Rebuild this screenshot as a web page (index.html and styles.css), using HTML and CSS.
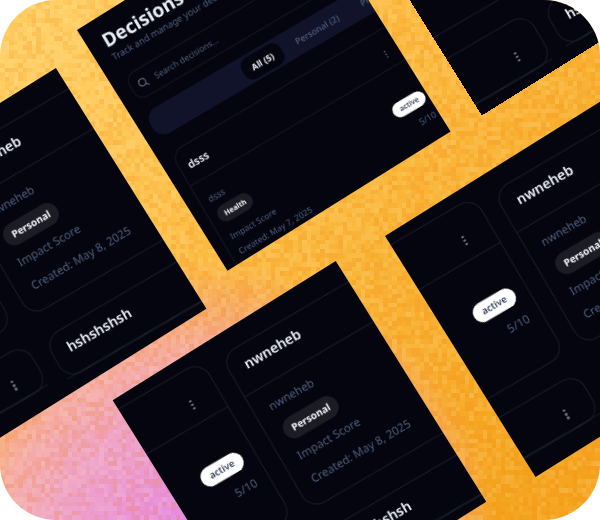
FILE: index.html
```html
<!DOCTYPE html>
<html lang="en">
<head>
<meta charset="utf-8">
<title>Decisions</title>
<link rel="stylesheet" href="styles.css">
</head>
<body>
<main class="poster">
  <canvas class="grain" id="grain" width="133" height="115"></canvas>
  <div class="stage">

    <!-- B -->
    <section class="panel panel-b">
      <div class="sheet">
        <div class="col">
          <article class="card card-tall">
            <header class="card-head"><h3>hshshshsh</h3><span class="dots"><i></i><i></i><i></i></span></header>
            <div class="card-body">
              <div class="info"><p class="desc">hshshshsh</p><span class="tag">Personal</span><p class="meta">Impact Score</p><p class="meta">Created: May 8, 2025</p></div>
              <div class="status"><span class="badge">active</span><span class="score">5/10</span></div>
            </div>
          </article>
          <article class="card card-low">
            <header class="card-head"><h3>nwneheb</h3><span class="dots"><i></i><i></i><i></i></span></header>
          </article>
        </div>
        <div class="col col-right">
          <article class="card">
            <header class="card-head"><h3>nwneheb</h3><span class="dots"><i></i><i></i><i></i></span></header>
            <div class="card-body">
              <div class="info"><p class="desc">nwneheb</p><span class="tag">Personal</span><p class="meta">Impact Score</p><p class="meta">Created: May 8, 2025</p></div>
              <div class="status"><span class="badge">active</span><span class="score">5/10</span></div>
            </div>
          </article>
          <article class="card">
            <header class="card-head"><h3>hshshshsh</h3><span class="dots"><i></i><i></i><i></i></span></header>
          </article>
        </div>
      </div>
    </section>

    <!-- A -->
    <section class="panel panel-a">
      <div class="sheet-a">
        <h1>Decisions</h1>
        <p class="lead">Track and manage your decisions</p>
        <div class="search">
          <svg class="lens" viewBox="0 0 16 16" aria-hidden="true"><circle cx="7" cy="7" r="5"/><path d="M10.8 10.8 14 14"/></svg>
          <span>Search decisions...</span>
        </div>
        <nav class="tabs"><span class="tab tab-on">All (5)</span><span class="tab">Personal (2)</span><span class="tab">Professional (1)</span></nav>
        <article class="card card-a">
          <header class="card-head"><h3>dsss</h3><span class="dots"><i></i><i></i><i></i></span></header>
          <div class="card-body">
            <div class="info"><p class="desc">dsss</p><span class="tag">Health</span><p class="meta">Impact Score</p><p class="meta">Created: May 7, 2025</p></div>
            <div class="status"><span class="badge">active</span><span class="score">5/10</span></div>
          </div>
        </article>
      </div>
    </section>

    <!-- C -->
    <section class="panel panel-c">
      <div class="sheet">
        <div class="col">
          <article class="card card-tall">
            <header class="card-head"><h3>hshshshsh</h3><span class="dots"><i></i><i></i><i></i></span></header>
            <div class="card-body">
              <div class="info"><p class="desc">hshshshsh</p><span class="tag">Personal</span><p class="meta">Impact Score</p><p class="meta">Created: May 8, 2025</p></div>
              <div class="status"><span class="badge">active</span><span class="score">5/10</span></div>
            </div>
          </article>
          <article class="card card-low">
            <header class="card-head"><h3>nwneheb</h3><span class="dots"><i></i><i></i><i></i></span></header>
          </article>
        </div>
        <div class="col col-right">
          <article class="card">
            <header class="card-head"><h3>nwneheb</h3><span class="dots"><i></i><i></i><i></i></span></header>
            <div class="card-body">
              <div class="info"><p class="desc">nwneheb</p><span class="tag">Personal</span><p class="meta">Impact Score</p><p class="meta">Created: May 8, 2025</p></div>
              <div class="status"><span class="badge">active</span><span class="score">5/10</span></div>
            </div>
          </article>
          <article class="card">
            <header class="card-head"><h3>hshshshsh</h3><span class="dots"><i></i><i></i><i></i></span></header>
          </article>
        </div>
      </div>
    </section>

    <!-- D -->
    <section class="panel panel-d">
      <div class="sheet">
        <div class="col">
          <article class="card card-tall">
            <header class="card-head"><h3>hshshshsh</h3><span class="dots"><i></i><i></i><i></i></span></header>
            <div class="card-body">
              <div class="info"><p class="desc">hshshshsh</p><span class="tag">Personal</span><p class="meta">Impact Score</p><p class="meta">Created: May 8, 2025</p></div>
              <div class="status"><span class="badge">active</span><span class="score">5/10</span></div>
            </div>
          </article>
          <article class="card card-low">
            <header class="card-head"><h3>nwneheb</h3><span class="dots"><i></i><i></i><i></i></span></header>
          </article>
        </div>
        <div class="col col-right">
          <article class="card">
            <header class="card-head"><h3>nwneheb</h3><span class="dots"><i></i><i></i><i></i></span></header>
            <div class="card-body">
              <div class="info"><p class="desc">nwneheb</p><span class="tag">Personal</span><p class="meta">Impact Score</p><p class="meta">Created: May 8, 2025</p></div>
              <div class="status"><span class="badge">active</span><span class="score">5/10</span></div>
            </div>
          </article>
          <article class="card">
            <header class="card-head"><h3>hshshshsh</h3><span class="dots"><i></i><i></i><i></i></span></header>
          </article>
        </div>
      </div>
    </section>

    <!-- E -->
    <section class="panel panel-e">
      <div class="sheet">
        <div class="col col-e">
          <article class="card card-tall">
            <header class="card-head"><h3>hshshshsh</h3><span class="dots"><i></i><i></i><i></i></span></header>
            <div class="card-body">
              <div class="info"><p class="desc">hshshshsh</p><span class="tag">Personal</span><p class="meta">Impact Score</p><p class="meta">Created: May 8, 2025</p></div>
              <div class="status"><span class="badge">active</span><span class="score">5/10</span></div>
            </div>
          </article>
          <article class="card card-tall">
            <header class="card-head"><h3>nwneheb</h3><span class="dots"><i></i><i></i><i></i></span></header>
          </article>
        </div>
        <div class="col col-right">
          <article class="card">
            <header class="card-head"><h3>nwneheb</h3><span class="dots"><i></i><i></i><i></i></span></header>
            <div class="card-body">
              <div class="info"><p class="desc">nwneheb</p><span class="tag">Personal</span><p class="meta">Impact Score</p><p class="meta">Created: May 8, 2025</p></div>
              <div class="status"><span class="badge">active</span><span class="score">5/10</span></div>
            </div>
          </article>
          <article class="card">
            <header class="card-head"><h3>hshshshsh</h3><span class="dots"><i></i><i></i><i></i></span></header>
          </article>
        </div>
      </div>
    </section>

  </div>
</main>
<script src="grain.js"></script>
</body>
</html>
```
FILE: styles.css
```css
* { box-sizing: border-box; }
html, body { margin: 0; background: #fff; }
body { width: 600px; height: 520px; overflow: hidden; font-family: "Noto Sans", "Open Sans", sans-serif; }
h1, h3, p { margin: 0; }

.poster {
  position: relative;
  width: 600px;
  height: 520px;
  overflow: hidden;
  border-radius: 56px;
  background:
    radial-gradient(circle 300px at 200px 560px, #e582e6 0, #e78ee0 20%, #efa3c8 50%, #f5aba6 68%, rgba(246, 166, 113, .85) 82%, rgba(246, 166, 100, 0) 100%),
    linear-gradient(128deg, #ffcf64 8%, #fcbc42 42%, #f5a51f 88%);
}
.grain {
  position: absolute;
  left: 0;
  top: 0;
  width: 600px;
  height: 520px;
  image-rendering: pixelated;
}

/* the collage: panels sit on a rotated free canvas */
.stage {
  position: absolute;
  left: 77px;
  top: 30px;
  width: 0;
  height: 0;
  transform-origin: 0 0;
  transform: rotate(-32deg);
}
.panel {
  position: absolute;
  width: 263px;
  height: 284px;
  overflow: hidden;
  background: #04050f;
}
.panel-a { left: 0; top: 0; }
.panel-b { left: -301px; top: 21px; }
.panel-c { left: -166px; top: 333px; }
.panel-d { left: 152px; top: 338px; }
.panel-e { left: 298px; top: 3px; }

.sheet {
  display: grid;
  grid-template-columns: 337px 337px;
  column-gap: 18px;
  width: 692px;
  align-items: start;
  transform-origin: 0 0;
  transform: rotate(1.7deg) translate(-240px, 10px);
}
.col { display: flex; flex-direction: column; gap: 21px; }
.col-e { gap: 24px; margin: 0 -2px 0 2px; }
.col-right { padding-top: 6px; gap: 25px; }

.card {
  border: 1px solid #1a1d2b;
  border-radius: 17px;
  color: #e6ebf5;
}
.card-head {
  display: flex;
  align-items: center;
  justify-content: space-between;
  height: 46.5px;
  padding: 0 28px 7px 16px;
  border-bottom: 1px solid #1a1d2b;
}
.card-tall .card-head { height: 53px; padding: 14px 28px 0 16px; }
.card-low .card-head { padding: 15px 28px 0 16px; }
.card-head h3 { font-size: 14px; font-weight: 600; line-height: 20px; color: #eef2fa; }
.card-body { display: flex; justify-content: space-between; height: 130px; padding: 10px 13px 0 16px; }
.card-tall .card-body { height: 128px; }

.dots { display: flex; flex-direction: column; gap: 1.6px; }
.dots i { width: 2.6px; height: 2.6px; border-radius: 50%; background: #6a7285; }

.info { display: flex; flex-direction: column; align-items: flex-start; }
.desc { font-size: 11.5px; line-height: 21px; color: #50607f; }
.tag {
  margin: 8px 0 5px;
  padding: 0 9px;
  height: 23px;
  line-height: 23px;
  border-radius: 12px;
  background: #1b1c24;
  color: #f4f6fa;
  font-size: 10px;
  font-weight: 700;
}
.meta { font-size: 11.5px; line-height: 21px; margin-bottom: 6px; color: #50607f; }

.status { display: flex; flex-direction: column; align-items: flex-end; padding-top: 31px; }
.badge {
  width: 47px;
  height: 20px;
  line-height: 19px;
  text-align: center;
  border-radius: 10px;
  background: #fff;
  color: #2f3a55;
  font-size: 9.5px;
  font-weight: 600;
}
.score { margin-top: 8px; font-size: 11.5px; line-height: 20px; color: #50607f; }

/* first panel: the app shown smaller, with its page header */
.sheet-a {
  width: 360px;
  transform-origin: 0 0;
  transform: rotate(1.5deg) scale(.77);
  padding: 15px 0 0 21.7px;
  color: #e6ebf5;
}
.sheet-a h1 { font-size: 25px; line-height: 30px; font-weight: 700; color: #e8eef8; }
.lead { margin-top: 2px; font-size: 12px; line-height: 16px; color: #50607f; white-space: nowrap; }
.search {
  display: flex;
  align-items: center;
  gap: 10px;
  width: 340px;
  height: 38px;
  margin-top: 20px;
  padding-left: 9px;
  border: 1px solid #1a1d2b;
  border-radius: 14px;
  font-size: 11px;
  color: #50607f;
}
.lens { width: 15px; height: 15px; fill: none; stroke: #6a7285; stroke-width: 1.4; stroke-linecap: round; }
.tabs {
  display: flex;
  align-items: center;
  gap: 8px;
  width: 440px;
  height: 38px;
  margin-top: 17px;
  margin-left: -1.7px;
  padding: 0 0 0 138px;
  border-radius: 16px;
  background: #11132a;
  font-size: 11.4px;
  font-weight: 500;
  color: #50607f;
  white-space: nowrap;
}
.tab { padding: 0 13px; height: 31px; line-height: 31px; border-radius: 12px; }
.tab-on { background: #04050f; color: #e8eef8; font-weight: 700; }
.card-a { width: 333px; margin-top: 23px; margin-left: 1.7px; }
.card-a .card-head { height: 50px; padding: 0 24px 0 11px; }
.card-a .dots { margin-top: 13px; }
.card-a .status { padding-top: 26px; }
.card-a .card-body { padding: 15.7px 9px 0 11px; }
.card-a .tag { margin: 4.3px 0 8.3px; font-size: 9.5px; }
.card-a .meta { margin-bottom: .5px; font-size: 11.1px; }
```
FILE: grain.js
```js
(function () {
  var canvas = document.getElementById('grain');
  var ctx = canvas.getContext('2d');
  var seed = 24681;
  function next() {
    seed = (seed * 1664525 + 1013904223) >>> 0;
    return seed / 4294967296;
  }
  for (var y = 0; y < canvas.height; y++) {
    for (var x = 0; x < canvas.width; x++) {
      var n = next();
      if (n < 0.5) {
        ctx.fillStyle = 'rgba(240,130,20,' + ((0.5 - n) * 0.44).toFixed(3) + ')';
      } else {
        ctx.fillStyle = 'rgba(255,240,200,' + ((n - 0.5) * 0.34).toFixed(3) + ')';
      }
      ctx.fillRect(x, y, 1, 1);
    }
  }
})();
```
